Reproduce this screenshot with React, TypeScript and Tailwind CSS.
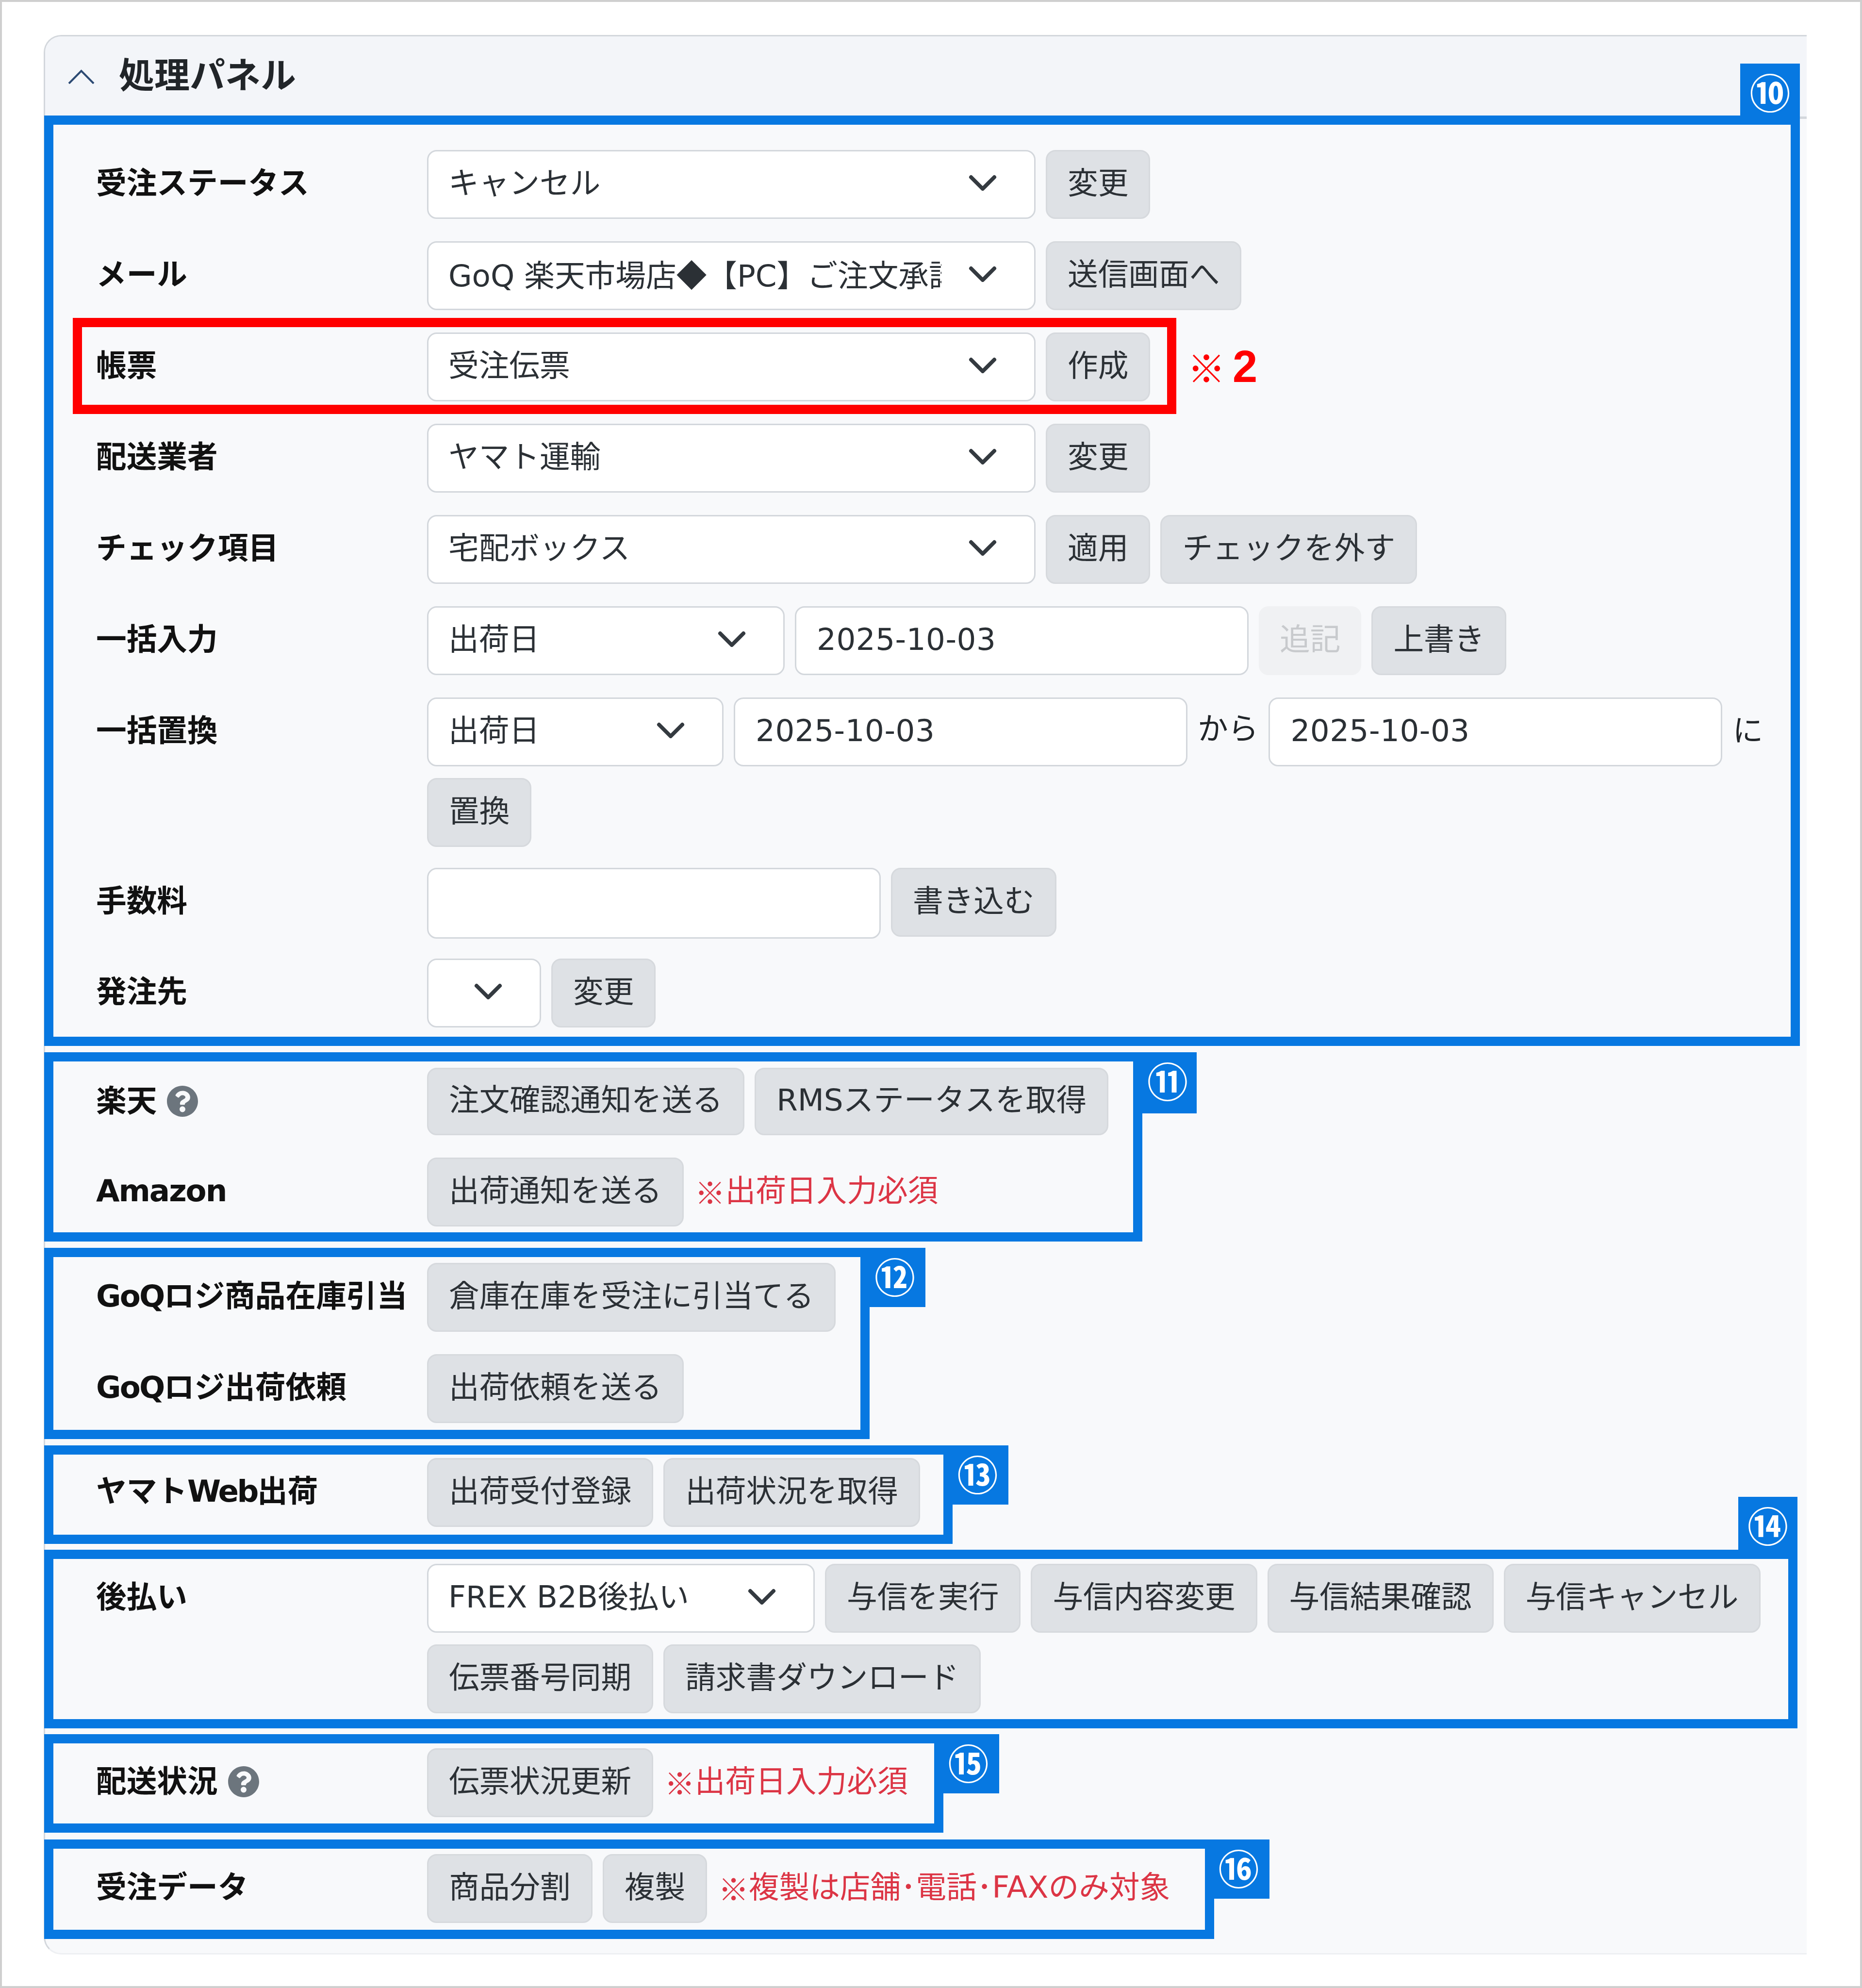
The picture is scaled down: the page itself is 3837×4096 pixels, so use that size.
import React from "react";
import { FaQuestionCircle } from "react-icons/fa";

function Btn({ children, h = "h-[142px]", disabled = false }: { children: React.ReactNode; h?: string; disabled?: boolean }) {
  return (
    <div
      className={
        disabled
          ? `${h} flex items-center rounded-[20px] bg-[#f0f1f3] px-[43px] pb-[4px] whitespace-nowrap text-[#c8cacd]`
          : `${h} flex items-center rounded-[20px] border-[3px] border-[#d6d9dd] bg-[#dee1e5] px-[42px] pb-[4px] whitespace-nowrap text-[#2b3035]`
      }
    >
      {children}
    </div>
  );
}

function Sel({ children, w, clip = false }: { children?: React.ReactNode; w: string; clip?: boolean }) {
  return (
    <div className={`${w} relative flex h-[142px] items-center rounded-[20px] border-[3px] border-[#d3d7dc] bg-white pb-[4px] pl-[41px] text-[#2b3035]`}>
      <div className={clip ? "w-[1016px] overflow-hidden whitespace-nowrap" : "whitespace-nowrap"}>{children}</div>
      <svg viewBox="0 0 16 12" className="absolute top-[33px] right-[74px] h-[48px] w-[64px]" fill="none" stroke="#343a40" strokeWidth="2" strokeLinecap="round" strokeLinejoin="round">
        <path d="M2 5l6 6 6-6" />
      </svg>
    </div>
  );
}

function Inp({ children, h = "h-[142px]" }: { children?: React.ReactNode; h?: string }) {
  return (
    <div className={`${h} flex w-[935px] items-center rounded-[20px] border-[3px] border-[#d3d7dc] bg-white pb-[4px] pl-[42px] tracking-[0.5px] text-[#2b3035]`}>
      {children}
    </div>
  );
}

function Label({ children }: { children: React.ReactNode }) {
  return <div className="flex h-[142px] w-[682px] shrink-0 items-center gap-[20px] pb-[4px] font-bold whitespace-nowrap text-[#111]">{children}</div>;
}

function Row({ label, children }: { label: React.ReactNode; children: React.ReactNode }) {
  return (
    <div className="relative flex pl-[88px]">
      <Label>{label}</Label>
      <div className="flex flex-1 flex-wrap items-start gap-x-[21px] gap-y-[24px]">{children}</div>
    </div>
  );
}

function Cjk({ children }: { children: React.ReactNode }) {
  return <span className="font-['Noto_Sans_CJK_JP',sans-serif]">{children}</span>;
}

function Note({ children }: { children: React.ReactNode }) {
  return <div className="ml-[2px] flex h-[142px] items-center pb-[4px] whitespace-nowrap text-[#dc3545]">{children}</div>;
}

function Help() {
  return <FaQuestionCircle className="h-[66px] w-[66px] text-[#6c757d]" />;
}

function Tab({ n, pos }: { n: string; pos: string }) {
  return (
    <div className={`absolute flex justify-center bg-[#0778e1] pt-[7px] font-['Noto_Sans_CJK_JP',sans-serif] text-[84px] leading-[100px] font-bold text-white ${pos}`}>
      {n}
    </div>
  );
}

function Box({ w, pad, tab, children }: { w: string; pad: string; tab: React.ReactNode; children: React.ReactNode }) {
  return <div className={`relative -ml-[2px] border-[19px] border-[#0778e1] ${w} ${pad}`}>{tab}{children}</div>;
}

export default function App() {
  return (
    <div className="h-[4096px] w-[3837px] border-[4px] border-[#cfcfcf] bg-white pt-[68px] pl-[86px] font-['DejaVu_Sans','Noto_Sans_CJK_JP',sans-serif] text-[62.7px]">
      <div className="h-[3955px] w-[3633px] rounded-l-[36px] border-y-[3px] border-l-[3px] border-t-[#d3d7dc] border-b-[#eef0f3] border-l-[#d3d7dc] bg-[#f8f9fb]">
        <div className="flex h-[170px] items-center rounded-tl-[33px] border-b-[5px] border-[#d3d7dc] bg-[#f3f5f9] pl-[47px]">
          <svg viewBox="0 0 55 30" className="h-[30px] w-[55px]" fill="none" stroke="#2c4a73" strokeWidth="4">
            <path d="M2 29L27.5 3L53 29" />
          </svg>
          <div className="ml-[50px] pb-[4px] text-[73px] font-bold text-[#212529]">処理パネル</div>
        </div>

        <div className="-mt-[7px] flex flex-col">
          <Box w="w-[3618px]" pad="pt-[52px] pb-[19px]" tab={<Tab n="⑩" pos="-top-[126px] -right-[19px] h-[126px] w-[123px]" />}>
            <div className="flex flex-col gap-y-[46px]">
              <Row label="受注ステータス">
                <Sel w="w-[1254px]">キャンセル</Sel>
                <Btn>変更</Btn>
              </Row>
              <Row label="メール">
                <Sel w="w-[1254px]" clip>GoQ 楽天市場店<Cjk>◆</Cjk>【PC】ご注文承諾メール</Sel>
                <Btn>送信画面へ</Btn>
              </Row>
              <Row label="帳票">
                <Sel w="w-[1254px]">受注伝票</Sel>
                <Btn>作成</Btn>
                <div className="absolute -top-[30px] left-[40px] h-[198px] w-[2274px] border-[19px] border-[#ff0000]" />
                <div className="absolute top-[10px] left-[2337px] flex h-[120px] items-center text-[#ff0000]">
                  <span className="w-[93px] font-['Noto_Sans_CJK_JP',sans-serif] text-[78px] leading-none font-bold">※</span>
                  <span className="font-['Liberation_Sans',sans-serif] text-[92px] leading-none font-bold">2</span>
                </div>
              </Row>
              <Row label="配送業者">
                <Sel w="w-[1254px]">ヤマト運輸</Sel>
                <Btn>変更</Btn>
              </Row>
              <Row label="チェック項目">
                <Sel w="w-[1254px]">宅配ボックス</Sel>
                <Btn>適用</Btn>
                <Btn>チェックを外す</Btn>
              </Row>
              <Row label="一括入力">
                <Sel w="w-[737px]">出荷日</Sel>
                <Inp>2025-10-03</Inp>
                <Btn disabled>追記</Btn>
                <Btn>上書き</Btn>
              </Row>
              <Row label="一括置換">
                <Sel w="w-[611px]">出荷日</Sel>
                <Inp>2025-10-03</Inp>
                <div className="flex h-[130px] items-center text-[#212529]">から</div>
                <Inp>2025-10-03</Inp>
                <div className="flex h-[142px] items-center pb-[4px] text-[#212529]">に</div>
                <Btn>置換</Btn>
              </Row>
              <div className="-mt-[3px]">
                <Row label="手数料">
                  <Inp h="h-[146px]" />
                  <Btn>書き込む</Btn>
                </Row>
              </div>
              <div className="-mt-[5px]">
                <Row label="発注先">
                  <Sel w="w-[235px]" />
                  <Btn>変更</Btn>
                </Row>
              </div>
            </div>
          </Box>

          <div className="mt-[13px]">
            <Box w="w-[2263px]" pad="pt-[13px] pb-[12px]" tab={<Tab n="⑪" pos="-top-[19px] -right-[131px] h-[126px] w-[120px]" />}>
              <div className="flex flex-col gap-y-[46px]">
                <div className="h-[139px]">
                  <Row label={<><span>楽天</span><Help /></>}>
                    <Btn h="h-[139px]">注文確認通知を送る</Btn>
                    <Btn h="h-[139px]">RMSステータスを取得</Btn>
                  </Row>
                </div>
                <Row label={<span className="tracking-[-2px]">Amazon</span>}>
                  <Btn>出荷通知を送る</Btn>
                  <Note><Cjk>※</Cjk>出荷日入力必須</Note>
                </Row>
              </div>
            </Box>
          </div>

          <div className="mt-[13px]">
            <Box w="w-[1701px]" pad="pt-[12px] pb-[14px]" tab={<Tab n="⑫" pos="-top-[19px] -right-[134px] h-[122px] w-[126px]" />}>
              <div className="flex flex-col gap-y-[46px]">
                <Row label={<span><span className="tracking-[-2.7px]">GoQ</span>ロジ商品在庫引当</span>}>
                  <Btn>倉庫在庫を受注に引当てる</Btn>
                </Row>
                <Row label={<span><span className="tracking-[-2.7px]">GoQ</span>ロジ出荷依頼</span>}>
                  <Btn>出荷依頼を送る</Btn>
                </Row>
              </div>
            </Box>
          </div>

          <div className="mt-[13px]">
            <Box w="w-[1872px]" pad="pt-[7px] pb-[16px]" tab={<Tab n="⑬" pos="-top-[19px] -right-[134px] h-[122px] w-[127px]" />}>
              <Row label={<span>ヤマト<span className="tracking-[-3.5px]">Web</span>出荷</span>}>
                <Btn>出荷受付登録</Btn>
                <Btn>出荷状況を取得</Btn>
              </Row>
            </Box>
          </div>

          <div className="mt-[12px]">
            <Box w="w-[3613px]" pad="pt-[10px] pb-[12px]" tab={<Tab n="⑭" pos="-top-[128px] -right-[19px] h-[128px] w-[122px]" />}>
              <Row label="後払い">
                <Sel w="w-[799px]">FREX B2B後払い</Sel>
                <Btn>与信を実行</Btn>
                <Btn>与信内容変更</Btn>
                <Btn>与信結果確認</Btn>
                <Btn>与信キャンセル</Btn>
                <Btn>伝票番号同期</Btn>
                <Btn>請求書ダウンロード</Btn>
              </Row>
            </Box>
          </div>

          <div className="mt-[12px]">
            <Box w="w-[1853px]" pad="pt-[10px] pb-[13px]" tab={<Tab n="⑮" pos="-top-[19px] -right-[134px] h-[122px] w-[127px]" />}>
              <Row label={<><span>配送状況</span><Help /></>}>
                <Btn>伝票状況更新</Btn>
                <Note><Cjk>※</Cjk>出荷日入力必須</Note>
              </Row>
            </Box>
          </div>

          <div className="mt-[14px]">
            <Box w="w-[2411px]" pad="pt-[11px] pb-[14px]" tab={<Tab n="⑯" pos="-top-[19px] -right-[133px] h-[122px] w-[127px]" />}>
              <Row label="受注データ">
                <Btn>商品分割</Btn>
                <Btn>複製</Btn>
                <Note><Cjk>※</Cjk>複製は店舗･電話･FAXのみ対象</Note>
              </Row>
            </Box>
          </div>
        </div>
      </div>
    </div>
  );
}
